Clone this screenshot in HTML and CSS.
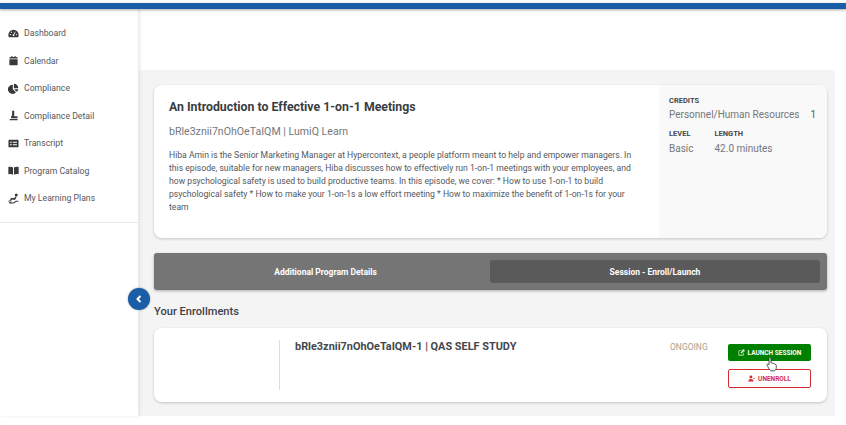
FILE: index.html
```html
<!DOCTYPE html>
<html lang="en">
<head>
<meta charset="utf-8">
<title>Program</title>
<link rel="stylesheet" href="styles.css">
</head>
<body>
<div class="topbar"></div>
<div class="layout">
  <aside class="sidebar">
    <nav class="nav">
      <a class="nav-item"><svg class="ico" viewBox="0 0 16 16"><path d="M8 2.500A7.500 7.500 0 0 0 .5 10c0 1.200.3 2.300.8 3.300h13.400c.5-1 .8-2.100.8-3.300A7.500 7.500 0 0 0 8 2.500z"/><circle cx="8" cy="10.500" r="1.300" fill="#fff"/><path d="M8 10.500 10.500 5.500" stroke="#fff" stroke-width="1.200"/><circle cx="3.500" cy="9.500" r=".9" fill="#fff"/><circle cx="5" cy="6" r=".9" fill="#fff"/><circle cx="12.500" cy="9.500" r=".9" fill="#fff"/></svg><span>Dashboard</span></a>
      <a class="nav-item"><svg class="ico" viewBox="0 0 16 16"><path d="M2 6h12v8a1.200 1.200 0 0 1-1.200 1H3.200A1.200 1.200 0 0 1 2 14zM3.200 3H5V1.500h1.500V3h3V1.500H11V3h1.800A1.200 1.200 0 0 1 14 4.200V5H2v-.8A1.200 1.200 0 0 1 3.200 3z"/></svg><span>Calendar</span></a>
      <a class="nav-item"><svg class="ico" viewBox="0 0 16 16"><path d="M7 2.500V9l4.600 4.600A6.700 6.700 0 1 1 7 2.500z"/><path d="M8.500 1a6.500 6.500 0 0 1 6.500 6.500H8.500z"/><path d="M8.800 9H15a6.700 6.700 0 0 1-2.300 3.800z"/></svg><span>Compliance</span></a>
      <a class="nav-item"><svg class="ico" viewBox="0 0 16 16"><path d="M6 1h3v8h3.500a1.500 1.500 0 0 1 1.500 1.500V12H4.500V9.500L6 8zM2.500 13h11.500v2H2.500z"/></svg><span>Compliance Detail</span></a>
      <a class="nav-item"><svg class="ico" viewBox="0 0 16 16"><path fill-rule="evenodd" d="M1.500 2.500h13a.8.8 0 0 1 .8.8v9.400a.8.8 0 0 1-.8.8h-13a.8.8 0 0 1-.8-.8V3.300a.8.800 0 0 1 .8-.8zM3 5.500v1.500h2.500V5.500zm4 0v1.500h6V5.500zM3 9v1.500h2.500V9zm4 0v1.500h6V9z"/></svg><span>Transcript</span></a>
      <a class="nav-item"><svg class="ico" viewBox="0 0 16 16"><path d="M.5 3c2.500-.6 5-.4 6.800.6V14c-1.800-1-4.300-1.100-6.800-.6zM15.500 3c-2.500-.6-5-.4-6.800.6V14c1.800-1 4.300-1.100 6.800-.6z"/></svg><span>Program Catalog</span></a>
      <a class="nav-item"><svg class="ico" viewBox="0 0 16 16"><circle cx="12" cy="3" r="2.200"/><path d="M3 8.500 6.500 7l2.500.5L10.500 5 12.500 6.500 10 10l-3-.4-3 1.400z"/><path d="M2 14.500h6c2 0 2-2.500 4-2.500h3" fill="none" stroke="#37393c" stroke-width="1.500"/><circle cx="3" cy="12.500" r="1.700" fill="none" stroke="#37393c" stroke-width="1.200"/></svg><span>My Learning Plans</span></a>
    </nav>
    <button class="collapse" type="button" aria-label="Collapse"><svg viewBox="0 0 10 10" width="10" height="10"><path d="M6.500 2 3.500 5l3 3" fill="none" stroke="#fff" stroke-width="2"/></svg></button>
  </aside>
  <main class="main">
    <div class="top-strip"></div>
    <div class="content">
      <section class="card program">
        <div class="program-body">
          <h1 class="program-title">An Introduction to Effective 1-on-1 Meetings</h1>
          <p class="program-sub">bRle3znii7nOhOeTaIQM | LumiQ Learn</p>
          <p class="program-desc">Hiba Amin is the Senior Marketing Manager at Hypercontext, a people platform meant to help and empower managers. In this episode, suitable for new managers, Hiba discusses how to effectively run 1-on-1 meetings with your employees, and how psychological safety is used to build productive teams. In this episode, we cover: * How to use 1-on-1 to build psychological safety * How to make your 1-on-1s a low effort meeting * How to maximize the benefit of 1-on-1s for your team</p>
        </div>
        <div class="program-meta">
          <div class="meta-label">CREDITS</div>
          <div class="meta-row"><span>Personnel/Human Resources</span><span class="credit-num">1</span></div>
          <div class="meta-cols">
            <div><div class="meta-label">LEVEL</div><div class="meta-value">Basic</div></div>
            <div><div class="meta-label">LENGTH</div><div class="meta-value">42.0 minutes</div></div>
          </div>
        </div>
      </section>
      <div class="tabs">
        <div class="tab">Additional Program Details</div>
        <div class="tab active">Session - Enroll/Launch</div>
      </div>
      <h2 class="section-title">Your Enrollments</h2>
      <section class="card enrollment">
        <div class="enroll-left"></div>
        <div class="enroll-name">bRle3znii7nOhOeTaIQM-1 | QAS SELF STUDY</div>
        <div class="enroll-status">ONGOING</div>
        <div class="enroll-actions">
          <button class="btn btn-launch" type="button"><svg class="btn-ico" viewBox="0 0 12 12"><path d="M1 2.500h5.500L5.500 3.500H2v6.500h6.500V7l1-1v5H1z" fill="#fff"/><path d="M7 1h4v4L9.700 3.700 6 7.500 4.500 6l3.800-3.700z" fill="#fff"/></svg>LAUNCH SESSION</button>
          <button class="btn btn-unenroll" type="button"><svg class="btn-ico" viewBox="0 0 12 12"><circle cx="5" cy="3.500" r="2.500" fill="#d32f2f"/><path d="M.5 11c0-2.500 2-4 4.500-4s4.500 1.500 4.500 4z" fill="#d32f2f"/><path d="M8.500 5.500H12v1H8.500z" fill="#d32f2f"/></svg>UNENROLL</button>
          <svg class="cursor" viewBox="0 0 14 18" width="12" height="16"><path d="M4.500 1.500c.8 0 1.300.6 1.300 1.300v5l.7-.2c.6 0 1 .3 1.200.6.600-.2 1.200 0 1.500.5.600-.2 1.300.2 1.500.7.700 0 1.300.5 1.300 1.300v2.500c0 1.500-1 3.300-2.300 3.800H6c-1 0-2-1.500-3-3.300L1.300 10.500c-.4-.7 0-1.400.7-1.500.6 0 1.100.4 1.500 1V2.800c0-.7.300-1.300 1-1.300z" fill="#fff" stroke="#222" stroke-width=".9"/></svg>
        </div>
      </section>
    </div>
  </main>
</div>
</body>
</html>
```
FILE: styles.css
```css
* { box-sizing: border-box; }
html, body { margin: 0; padding: 0; }
body {
  width: 846px;
  height: 425px;
  overflow: hidden;
  background: #fff;
  font-family: Roboto, "Liberation Sans", sans-serif;
  color: #3b3e42;
  padding-top: 3px;
}
.topbar {
  height: 6px;
  background: #1a5ea8;
  box-shadow: 0 1px 3px rgba(0,0,0,.35);
  position: relative;
  z-index: 3;
}
.layout { display: flex; height: 407px; width: 835px; }
.sidebar {
  width: 139px;
  flex: none;
  position: relative;
  background: #fff;
  border-right: 1px solid #ececec;
  box-shadow: 1px 0 3px rgba(0,0,0,.08);
  z-index: 2;
}
.nav {
  display: flex;
  flex-direction: column;
  padding: 10.500px 0 10px;
  border-bottom: 1px solid #e8e8e8;
}
.nav-item {
  display: flex;
  align-items: center;
  height: 27.500px;
  padding-left: 8px;
  font-size: 8.700px;
  color: #55585c;
}
.ico { width: 11px; height: 11px; fill: #37393c; margin-right: 5px; flex: none; }
.collapse {
  position: absolute;
  top: 279px;
  left: 128px;
  width: 22px;
  height: 22px;
  border-radius: 50%;
  border: 0;
  padding: 0;
  background: #1a5ea8;
  display: flex;
  align-items: center;
  justify-content: center;
  box-shadow: 0 0 2px rgba(0,0,0,.4);
}
.main { flex: 1; min-width: 0; display: flex; flex-direction: column; }
.top-strip { height: 61px; background: #fff; flex: none; }
.content {
  flex: 1;
  padding: 15px 0 0 15px;
  background: #f4f4f4;
}
.card {
  background: #fff;
  border-radius: 8px;
  box-shadow: 0 1px 3px rgba(0,0,0,.2);
}
.program { display: flex; height: 153px; overflow: hidden; width: 673px; }
.program-body { width: 505px; flex: none; padding: 14px 22px 0 15px; }
.program-title { margin: 0; font-size: 12.300px; line-height: 16px; font-weight: 700; color: #3a3d41; }
.program-sub { margin: 10px 0 0; font-size: 10.600px; line-height: 14px; color: #74777b; }
.program-desc { margin: 10px 0 0; font-size: 8.650px; line-height: 13px; color: #55585c; }
.program-meta { flex: 1; background: #f9f9f9; padding: 11px 10px 0 10px; }
.meta-label { font-size: 7.500px; line-height: 10px; font-weight: 700; color: #45484c; }
.meta-row { display: flex; justify-content: space-between; font-size: 10px; line-height: 14px; color: #74777b; margin-top: 2px; }
.credit-num { color: #55585c; margin-right: 1px; }
.meta-cols { display: flex; gap: 21px; margin-top: 7px; }
.meta-value { font-size: 10px; line-height: 14px; color: #74777b; margin-top: 3px; }
.tabs {
  display: flex;
  width: 673px;
  height: 37px;
  margin-top: 15px;
  padding: 7px;
  background: #757575;
  border-radius: 3px;
  box-shadow: 0 1px 3px rgba(0,0,0,.3);
}
.tab {
  flex: 1;
  border-radius: 3px;
  display: flex;
  align-items: center;
  justify-content: center;
  color: #fff;
  font-size: 8.500px;
  font-weight: 700;
}
.tab.active { flex: none; width: 330px; background: #5a5a5a; }
.section-title { margin: 15px 0 0; font-size: 11.100px; line-height: 14px; font-weight: 500; color: #3f4246; }
.enrollment {
  display: flex;
  width: 673px;
  height: 74px;
  margin-top: 9px;
  padding: 12px 16px 0 0;
}
.enroll-left { width: 126px; height: 50px; border-right: 1px solid #ddd; flex: none; }
.enroll-name { margin-left: 15px; width: 375px; font-size: 10.900px; line-height: 14px; font-weight: 700; color: #44474b; }
.enroll-status { width: 58px; font-size: 8.500px; line-height: 14px; color: #a8a294; }
.enroll-actions { width: 83px; display: flex; flex-direction: column; gap: 8px; position: relative; padding-top: 4px; }
.btn {
  width: 83px;
  height: 17px;
  display: flex;
  align-items: center;
  justify-content: center;
  border-radius: 2px;
  padding: 0;
  font-family: inherit;
  font-size: 6.500px;
  font-weight: 700;
}
.btn-ico { width: 7px; height: 7px; margin-right: 3px; }
.btn-launch { background: #008000; border: 0; color: #fff; }
.btn-unenroll { height: 19px; background: #fff; border: 1px solid #d32f2f; color: #d32f4f; }
.cursor { position: absolute; left: 38px; top: 16px; }
```
